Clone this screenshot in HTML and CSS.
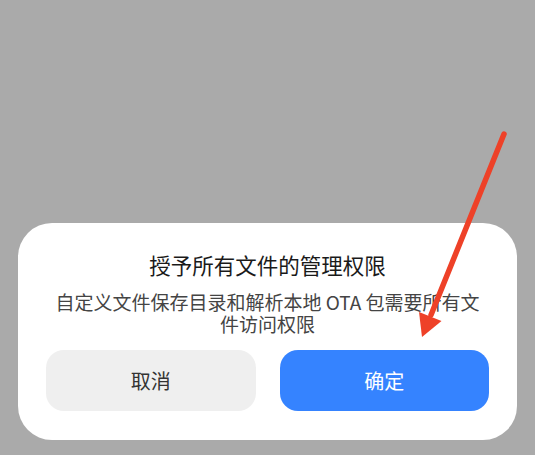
FILE: index.html
```html
<!DOCTYPE html>
<html lang="zh">
<head>
<meta charset="utf-8">
<link rel="stylesheet" href="styles.css">
</head>
<body>
<div class="screen">
  <div class="dialog">
    <div class="title">授予所有文件的管理权限</div>
    <div class="message">自定义文件保存目录和解析本地 OTA 包需要所有文件访问权限</div>
    <div class="actions">
      <div class="btn btn-cancel">取消</div>
      <div class="btn btn-ok">确定</div>
    </div>
  </div>
  <svg class="annotation" width="535" height="455" viewBox="0 0 535 455">
    <line x1="504" y1="134" x2="431" y2="315" stroke="#ee4128" stroke-width="5.5" stroke-linecap="round"/>
    <polygon points="422,337 441.5,321 419,312" fill="#ee4128"/>
  </svg>
</div>
</body>
</html>
```
FILE: styles.css
```css
html, body {
  margin: 0;
  padding: 0;
}
body {
  background: #aaaaaa;
  font-family: "Noto Sans CJK SC", "Noto Sans", sans-serif;
}
.screen {
  position: relative;
  width: 535px;
  height: 455px;
  display: flex;
  flex-direction: column;
  justify-content: flex-end;
  padding: 0 18px 15px 18px;
  box-sizing: border-box;
}
.dialog {
  background: #ffffff;
  border-radius: 34px;
  padding: 28px 28px 29px 28px;
  display: flex;
  flex-direction: column;
  align-items: center;
}
.title {
  font-size: 21.5px;
  line-height: 28px;
  font-weight: 400;
  color: #1a1a1a;
  text-align: center;
}
.message {
  margin-top: 12px;
  padding: 0 6px;
  font-size: 19px;
  line-height: 22px;
  color: #444444;
  text-align: center;
}
.actions {
  margin-top: 15px;
  width: 100%;
  display: flex;
  gap: 24px;
}
.btn {
  flex: 1;
  height: 61px;
  border-radius: 18px;
  display: flex;
  align-items: center;
  justify-content: center;
  font-size: 20px;
}
.btn-cancel {
  background: #efefef;
  color: #333333;
}
.btn-ok {
  background: #3583ff;
  color: #ffffff;
}
.annotation {
  position: absolute;
  left: 0;
  top: 0;
  pointer-events: none;
}
```
